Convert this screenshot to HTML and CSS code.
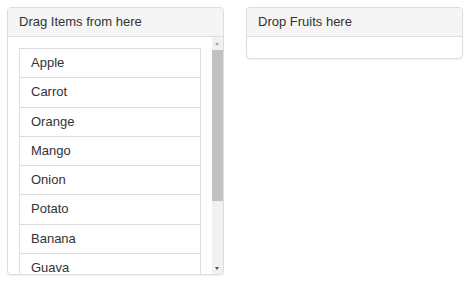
FILE: index.html
```html
<!DOCTYPE html>
<html lang="en">
  <head>
    <meta charset="UTF-8" />
    <title>Drag and Drop</title>
    <link rel="stylesheet" href="styles.css">
  </head>
  <body>
    <div class="board">
      <div class="panel">
        <div class="panel-heading">Drag Items from here</div>
        <div class="panel-body scroll">
          <div class="scroll-content">
            <ul class="list-group">
              <li class="list-group-item">Apple</li>
              <li class="list-group-item">Carrot</li>
              <li class="list-group-item">Orange</li>
              <li class="list-group-item">Mango</li>
              <li class="list-group-item">Onion</li>
              <li class="list-group-item">Potato</li>
              <li class="list-group-item">Banana</li>
              <li class="list-group-item">Guava</li>
            </ul>
          </div>
          <!-- scrollbar drawn by hand, headless browser hides the real one -->
          <div class="scrollbar">
            <span class="scroll-btn up"></span>
            <div class="scroll-track"><div class="scroll-thumb"></div></div>
            <span class="scroll-btn down"></span>
          </div>
        </div>
      </div>

      <div class="panel panel-drop">
        <div class="panel-heading">Drop Fruits here</div>
        <div class="panel-body drop-zone"></div>
      </div>
    </div>
  </body>
</html>
```

FILE: styles.css
```css
/* Reset */
* {
  box-sizing: border-box;
}

body,
ul,
li {
  margin: 0;
  padding: 0;
}

body {
  font-family: "Liberation Sans", Arial, sans-serif;
  font-size: 13px;
  color: #333;
  background-color: #fff;
  padding: 7px;
}

.board {
  display: flex;
  align-items: flex-start;
  gap: 22px;
}

.panel {
  width: 217px;
  border: 1px solid #ddd;
  border-radius: 4px;
  background-color: #fff;
  box-shadow: 0 1px 1px rgba(0, 0, 0, 0.05);
  overflow: hidden;
}

.panel-heading {
  height: 29px;
  line-height: 28px;
  padding: 0 11px;
  background-color: #f5f5f5;
  border-bottom: 1px solid #ddd;
}

.scroll {
  display: flex;
  height: 237px;
}

.scroll-content {
  flex: 1;
  overflow: hidden;
  padding: 11px 11px 0 11px;
}

.drop-zone {
  height: 21px;
}

.list-group {
  list-style: none;
}

.list-group-item {
  padding: 6px 11px;
  line-height: 16.3px;
  border: 1px solid #ddd;
  margin-bottom: -1px;
  background-color: #fff;
}

/* Scrollbar */
.scrollbar {
  width: 11px;
  display: flex;
  flex-direction: column;
  background-color: #f1f1f1;
}

.scroll-btn {
  display: block;
  height: 12px;
  position: relative;
}

.scroll-btn::after {
  content: "";
  position: absolute;
  left: 3px;
  border-left: 2.5px solid transparent;
  border-right: 2.5px solid transparent;
}

.scroll-btn.up::after {
  top: 5px;
  border-bottom: 3px solid #a3a3a3;
}

.scroll-btn.down::after {
  top: 5px;
  border-top: 3px solid #505050;
}

.scroll-track {
  flex: 1;
  padding-top: 1px;
}

.scroll-thumb {
  height: 151px;
  background-color: #c1c1c1;
}
```
